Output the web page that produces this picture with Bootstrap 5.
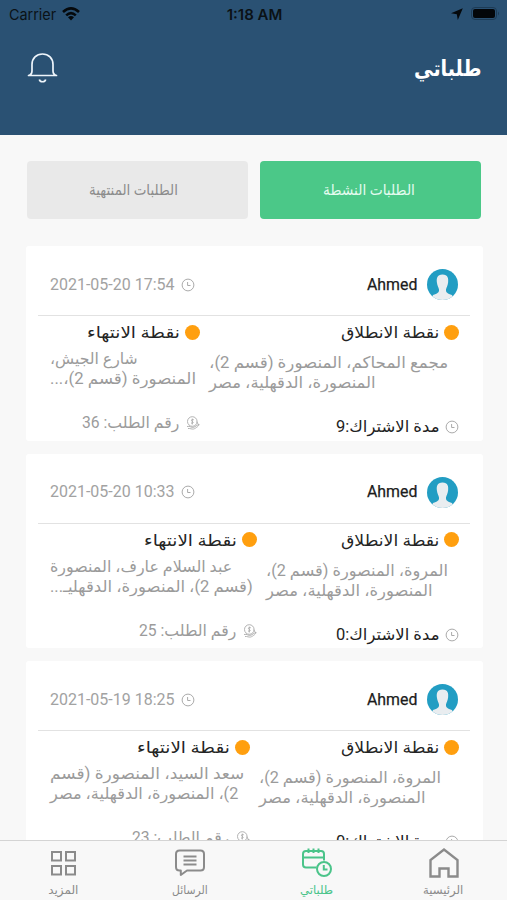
<!DOCTYPE html>
<html lang="ar" dir="ltr">
<head>
<meta charset="utf-8">
<meta name="viewport" content="width=device-width, initial-scale=1">
<title>طلباتي</title>
<link href="https://cdn.jsdelivr.net/npm/bootstrap@5.3.0/dist/css/bootstrap.min.css" rel="stylesheet">
<style>
body{background:#f8f8f8;font-family:Roboto,"DejaVu Sans",sans-serif;height:900px;overflow:hidden;color:#222}
.topbar{background:#2a5173;height:135px;flex:none}
.status{height:28px;padding:0 7px 0 9px;color:#0b1116;font:15px Inter,sans-serif}
.status>*{flex:1 1 0}
.heading{padding:0 26px 0 27px;height:80px}
.fit{display:inline-block;white-space:nowrap;flex:none}
.fit>span{display:inline-block;transform-origin:right center}
[dir=ltr].fit>span{transform-origin:left center}
.page-title{color:#fff;font:bold 22px/30px "DejaVu Sans",sans-serif;padding-top:2px}
.tabs{padding:26px 26px 0 27px;gap:12px}
.tabs .btn{height:58px;border:0;border-radius:4px;font-size:15px;padding:0 4px 0 0;line-height:20px}
.tabs .tab-off{padding-right:8px}
.tab-on,.tab-on:hover{background:#4bc888;color:#e4fbef}
.tab-off,.tab-off:hover{background:#e9e9e9;color:#8c8c8c}
.orders{padding:27px 24px 0 26px;gap:13px;min-height:0;overflow:hidden}
.order{background:#fff;height:194.500px;flex:none;border-radius:3px;overflow:hidden}
.order-head{height:70px;margin:0 13px 0 12px;padding:8px 12px 0;border-bottom:1px solid #e2e2e2}
.who{font-size:16.500px;color:#1c1c1c;-webkit-text-stroke:.25px #1c1c1c;gap:10px}
.when{font-size:16.500px;color:#a2a2a2;gap:6px}
.who .fit,.when .fit{padding-top:1px}
.face{border-radius:50%;overflow:hidden}
.order-body{padding:5px 24px 0 24px}
.pt{height:24px;gap:4.500px;font-size:16px;line-height:24px;color:#242424}
.dot{width:15px;height:15px;border-radius:50%;background:#ff9f0f;flex:none;margin-bottom:2px}
.addr{font-size:16px;line-height:20px;height:40px;color:#9b9b9b}
.addr .fit{display:block}
.foot{height:20px;font-size:16px;line-height:20px;gap:6px}
.foot-dim{color:#9b9b9b}
.tabbar{height:60px;flex:none;background:#f8f8f8;border-top:1px solid #d4d4d4;color:#8b8b8b;font-size:12px;line-height:16px}
.tabbar svg{width:32px;height:32px;margin-top:6px;margin-bottom:3px}
.tabbar .current{color:#4bc48a}
svg{flex:none;display:block}
</style>
<script src="https://cdn.jsdelivr.net/npm/bootstrap@5.3.0/dist/js/bootstrap.bundle.min.js"></script>
</head>
<body class="d-flex flex-column">
<svg class="d-none">
  <symbol id="clock" viewBox="0 0 14 14"><circle cx="7" cy="7" r="5.900" fill="none" stroke="#aaa"/><path d="M6.600 4V7.500H9.500" fill="none" stroke="#aaa"/></symbol>
  <symbol id="coin" viewBox="0 0 14 14"><g fill="none" stroke="#aaa" stroke-width=".9"><circle cx="6.300" cy="5.500" r="4.800"/><path d="M7.800 3.800C5.800 2.800 4.600 4.400 6.200 5.300S7.500 7.600 5 7M6.300 2.600V8.500M1 10.500C4 9.600 5 12 8 11.200L13 8.200C13.600 9.200 10 12.400 7.600 13 5.500 13.400 4.300 12.200 2 12.500M10.800 5.500 12 8"/></g></symbol>
  <symbol id="avatar" viewBox="0 0 31 31"><rect width="31" height="31" fill="#229dc3"/><path d="M15.500 5.500C10 5.500 9.400 9.500 9.900 13.500 10.300 17 11.600 18.500 12 20.500 12.300 23.500 10.500 24.500 6 26L4 31H27L25 26C20.500 24.500 18.700 23.500 19 20.500 19.400 18.500 20.700 17 21.100 13.500 21.600 9.500 21 5.500 15.500 5.500Z" fill="#e9edf0"/></symbol>
</svg>
<header class="topbar">
  <div class="status d-flex align-items-center">
    <div class="d-flex align-items-center"><span class="fit" dir="ltr" data-w="47">Carrier</span>
      <svg style="margin-left:6px" width="18" height="14" viewBox="0 0 18 14"><g fill="none" stroke="#05090c" stroke-width="2.600"><path d="M1 5Q9-2.200 17 5M4.200 8.400Q9 4 13.800 8.400"/></g><path d="M6 10.300Q9 7.800 12 10.300L9 13.500Z" fill="#05090c"/></svg></div>
    <div class="text-center fw-semibold"><span class="fit" dir="ltr" data-w="56">1:18 AM</span></div>
    <div class="d-flex justify-content-end align-items-center">
      <svg class="me-2" width="12" height="12" viewBox="0 0 12 12"><path d="M11.800.2 0 5.300 5.800 6.200 6.800 12Z" fill="#05090c"/></svg>
      <svg width="29" height="14" viewBox="0 0 29 14"><rect x=".5" y=".5" width="25" height="12" rx="3.500" fill="none" stroke="#1d3b55"/><rect x="2" y="2" width="22" height="9" rx="2" fill="#030609"/><path d="M27 4.500Q29 6.500 27 8.500Z" fill="#1d3b55"/></svg></div>
  </div>
  <div class="heading d-flex justify-content-between align-items-center">
    <svg width="31" height="32" viewBox="0 0 31 32"><path d="M1.500 23.500H29.500C27 22.800 26 22 26 19V12.500C26 6 21.500 2 15.500 2S5 6 5 12.500V19C5 22 4 22.800 1.500 23.500ZM12.300 27.500C13.200 30.500 17.800 30.500 18.700 27.500" fill="none" stroke="#eef5fb" stroke-width="1.700" stroke-linejoin="round"/></svg>
    <h1 class="page-title m-0"><span class="fit" dir="rtl" data-w="67">طلباتي</span></h1>
  </div>
</header>
<div class="tabs d-flex">
  <button class="btn tab-off flex-fill w-50"><span class="fit" dir="rtl" data-w="89">الطلبات المنتهية</span></button>
  <button class="btn tab-on flex-fill w-50"><span class="fit" dir="rtl" data-w="92">الطلبات النشطة</span></button>
</div>
<main class="orders d-flex flex-column flex-fill" id="orders"></main>
<nav class="tabbar d-flex text-center">
  <div class="col-3 d-flex flex-column align-items-center"><svg viewBox="0 0 32 32" fill="none" stroke="currentColor" stroke-width="2"><path d="M5 5H14V13.500H5ZM19 5H28V13.500H19ZM5 19H14V27.500H5ZM19 19H28V27.500H19Z"/></svg><span class="fit" dir="rtl" data-w="30">المزيد</span></div>
  <div class="col-3 d-flex flex-column align-items-center"><svg viewBox="0 0 32 32" fill="none" stroke="currentColor" stroke-width="2" stroke-linejoin="round"><path d="M5.500 3.500H26.500Q30 3.500 30 7V20Q30 23.500 26.500 23.500H13L6.800 28V23.500H5.500Q2 23.500 2 20V7Q2 3.500 5.500 3.500ZM9.500 9.500H22.500M9.500 13.500H22.500M9.500 17.500H22.500"/></svg><span class="fit" dir="rtl" data-w="36">الرسائل</span></div>
  <div class="col-3 d-flex flex-column align-items-center current"><svg viewBox="0 0 32 32" fill="none" stroke="currentColor" stroke-width="2"><path d="M15.500 20.500H5Q2 20.500 2 17.500V7Q2 4 5 4H20Q23 4 23 7V13.500M2 10.500H23M7.500 1.500V6M12.500 1.500V6M17.500 1.500V6"/><circle cx="23" cy="22" r="7"/><path d="M22.800 18V22.500H26.500"/></svg><span class="fit" dir="rtl" data-w="33">طلباتي</span></div>
  <div class="col-3 d-flex flex-column align-items-center"><svg viewBox="0 0 32 32" fill="none" stroke="currentColor" stroke-width="2.400"><path d="M2.500 29.500V13L16 2.500 29.500 13V29.500H20.500V21.500H11.500V29.500Z"/></svg><span class="fit" dir="rtl" data-w="40">الرئيسية</span></div>
</nav>
<script>
const orders = [
  {date:'2021-05-20 17:54', from:[['مجمع المحاكم، المنصورة (قسم 2)،',239],['المنصورة، الدقهلية، مصر',167]], to:[['شارع الجيش،',88],['المنصورة (قسم 2)،...',146]], toWidth:149.5, months:9, no:36},
  {date:'2021-05-20 10:33', from:[['المروة، المنصورة (قسم 2)،',182],['المنصورة، الدقهلية، مصر',167]], to:[['عبد السلام عارف، المنصورة',182],['(قسم 2)، المنصورة، الدقهليـ...',203]], toWidth:206.5, months:0, no:25},
  {date:'2021-05-19 18:25', from:[['المروة، المنصورة (قسم 2)،',182],['المنصورة، الدقهلية، مصر',167]], to:[['سعد السيد، المنصورة (قسم',194],['2)، المنصورة، الدقهلية، مصر',188]], toWidth:199.5, months:0, no:23}
];
const fit = (t, w, dir = 'rtl') => `<span class="fit" dir="${dir}" data-w="${w}">${t}</span>`;
const icon = (id, s = 14, cls = '') => `<svg class="${cls}" width="${s}" height="${s}"><use href="#${id}"/></svg>`;
const point = (label, w, lines, gap) => `
  <div class="pt d-flex justify-content-end align-items-center">${fit(label, w)}<span class="dot"></span></div>
  <div class="addr ${gap}">${lines.map(l => fit(...l)).join('')}</div>`;
document.getElementById('orders').innerHTML = orders.map(o => `
<article class="order">
  <div class="order-head d-flex justify-content-between align-items-center">
    <div class="when d-flex align-items-center">${fit(o.date, 125, 'ltr')}${icon('clock')}</div>
    <div class="who d-flex align-items-center">${fit('Ahmed', 50, 'ltr')}${icon('avatar', 31, 'face')}</div>
  </div>
  <div class="order-body d-flex justify-content-between">
    <div style="width:${o.toWidth}px">${point('نقطة الانتهاء', 93, o.to, 'mt-1')}
      <div class="foot foot-dim d-flex justify-content-end align-items-center mt-4">${fit('رقم الطلب: ' + o.no, 97)}${icon('coin')}</div></div>
    <div style="width:${399.5 - o.toWidth}px">${point('نقطة الانطلاق', 98, o.from, 'mt-2')}
      <div class="foot d-flex justify-content-end align-items-center mt-4">${fit('مدة الاشتراك:' + o.months, 103)}${icon('clock')}</div></div>
  </div>
</article>`).join('');
/* Squeeze every label into its design width */
document.querySelectorAll('.fit').forEach(el => {
  el.innerHTML = `<span>${el.innerHTML}</span>`;
  const inner = el.firstChild, w = +el.dataset.w;
  inner.style.transform = `scaleX(${w / inner.offsetWidth})`;
  el.style.width = w + 'px';
});
</script>
</body>
</html>
